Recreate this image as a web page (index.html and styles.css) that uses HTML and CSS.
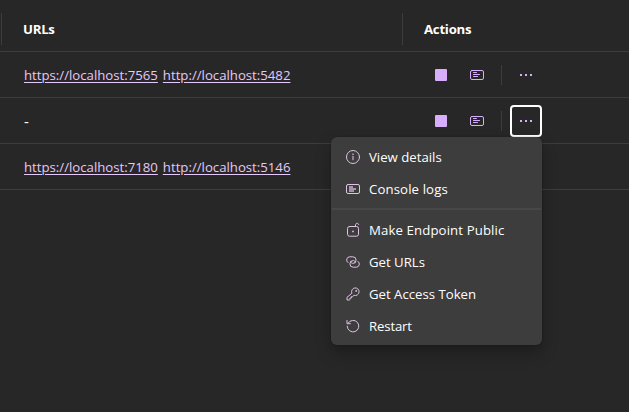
FILE: index.html
```html
<!DOCTYPE html>
<html lang="en">
<head>
<meta charset="utf-8">
<title>Resources</title>
<link rel="stylesheet" href="styles.css">
</head>
<body>
<svg class="sprite" aria-hidden="true">
  <symbol id="logs" viewBox="0 0 16 16"><rect x="1.5" y="3.5" width="13" height="9" rx="1.5"/><path d="M4.5 5.5h3M4.5 7.5h6M4.5 9.5h4"/></symbol>
  <symbol id="dots" viewBox="0 0 16 16"><rect x="2" y="7" width="2" height="2"/><rect x="7" y="7" width="2" height="2"/><rect x="12" y="7" width="2" height="2"/></symbol>
</svg>
<main class="grid">
  <div class="row header">
    <div class="cell head">URLs</div>
    <div class="cell head actions-head">Actions</div>
  </div>
  <div class="row">
    <div class="cell urls"><a href="#">https://localhost:7565</a><a href="#">http://localhost:5482</a></div>
    <div class="cell actions">
      <span class="stop"></span><svg class="icon line"><use href="#logs"/></svg><span class="divider"></span>
      <button class="more" aria-label="Actions"><svg class="icon solid"><use href="#dots"/></svg></button>
    </div>
  </div>
  <div class="row">
    <div class="cell urls"><span class="none">-</span></div>
    <div class="cell actions">
      <span class="stop"></span><svg class="icon line"><use href="#logs"/></svg><span class="divider"></span>
      <div class="anchor">
        <button class="more focused" aria-label="Actions"><svg class="icon solid"><use href="#dots"/></svg></button>
        <div class="menu">
          <div class="item"><svg class="icon" viewBox="0 0 16 16"><circle cx="8" cy="8" r="6.5"/><path class="soft" d="M8 7.6v3"/><circle class="dot" cx="8" cy="5.2" r=".8"/></svg><span>View details</span></div>
          <div class="item"><svg class="icon" viewBox="0 0 16 16"><rect x="1.5" y="3.5" width="13" height="9" rx="1.5"/><path class="block" d="M4 5h4v2h3v2H9v2H4z"/></svg><span class="wide">Console logs</span></div>
          <div class="separator"></div>
          <div class="item"><svg class="icon" viewBox="0 0 16 16"><rect x="2.5" y="4.5" width="11" height="9.7" rx="2"/><path d="M10.5 4.5V3c0-1 .7-1.7 1.6-1.7s1.6.7 1.6 1.4"/><circle class="dot" cx="8" cy="9.4" r=".9"/></svg><span class="wide">Make Endpoint Public</span></div>
          <div class="item"><svg class="icon" viewBox="0 0 16 16"><path d="M3 8.6A3.2 3.2 0 0 1 4.7 2.8h3.1a3.3 3.3 0 0 1 0 6.6H7.4a1.6 1.6 0 0 1-1.5-2.2"/><path d="M13 7.4a3.2 3.2 0 0 1-1.7 5.8H8.2a3.3 3.3 0 0 1 0-6.6h.4a1.6 1.6 0 0 1 1.5 2.2"/></svg><span>Get URLs</span></div>
          <div class="item"><svg class="icon" viewBox="0 0 16 16"><path d="M6.7 7A3.8 3.8 0 1 1 9 9.3L7.7 10.6H6.4V12H5v1.5L4.3 14H2v-2.3z"/><circle class="dot" cx="11.2" cy="4.9" r=".9"/></svg><span>Get Access Token</span></div>
          <div class="item"><svg class="icon" viewBox="0 0 16 16"><path d="M3 5.2A5.8 5.8 0 1 1 2.2 8.2M2 2.5v3.2h3.4"/></svg><span class="narrow">Restart</span></div>
        </div>
      </div>
    </div>
  </div>
  <div class="row">
    <div class="cell urls"><a href="#">https://localhost:7180</a><a href="#">http://localhost:5146</a></div>
    <div class="cell actions"></div>
  </div>
</main>
</body>
</html>
```
FILE: styles.css
```css
* { box-sizing: border-box; }
body {
  margin: 0;
  height: 412px;
  overflow: hidden;
  background: #272727;
  color: #fff;
  font: 13.2px/20px "Open Sans", "Noto Sans", sans-serif;
}
.sprite { position: absolute; width: 0; height: 0; }
.row {
  display: grid;
  grid-template-columns: 401px 1fr;
  height: 46px;
  padding-left: 1px;
  border-bottom: 1px solid #3d3d3d;
}
.header { height: 52px; padding-top: 13px; }
.cell { display: flex; align-items: center; }
.head {
  height: 32px;
  padding-left: 21px;
  border-left: 1px solid #3d3d3d;
  font-weight: 700;
  letter-spacing: -.25px;
}
.actions-head { padding-left: 21px; }
.urls { gap: 5px; padding-left: 23px; }
.none { font-size: 15px; }
a { color: #e6c8fa; text-underline-offset: 2px; text-decoration-thickness: 1px; }
.actions { padding-left: 33px; }
.icon {
  display: block;
  flex: none;
  width: 16px;
  height: 16px;
  fill: none;
  stroke: currentColor;
  stroke-width: 1;
  stroke-linecap: round;
  stroke-linejoin: round;
}
.stop { width: 12px; height: 12px; margin-right: 22px; border-radius: 1px; background: #d7aefb; }
.line { color: #d7aefb; }
.solid { fill: currentColor; stroke: none; }
.divider { width: 1px; height: 20px; margin: 0 8px 0 16px; background: #3d3d3d; }
.anchor { position: relative; }
.more {
  display: grid;
  place-items: center;
  width: 32px;
  height: 32px;
  padding: 0;
  border: 2px solid transparent;
  border-radius: 4px;
  background: none;
  color: #d7aefb;
}
.focused { border-color: #fff; }
.menu {
  position: absolute;
  z-index: 1;
  top: 32px;
  right: 0;
  width: 211px;
  padding: 4px 0 3px;
  border-radius: 6px;
  background: #3d3d3d;
  box-shadow: 0 0 2px rgba(0, 0, 0, .24), 0 8px 16px rgba(0, 0, 0, .28);
}
.item {
  display: flex;
  align-items: center;
  gap: 8px;
  height: 32px;
  padding-left: 14px;
  white-space: nowrap;
}
.item .icon { color: #dfc3e4; }
.item .dot { fill: currentColor; stroke: none; }
.item .soft { stroke-width: 1.6; opacity: .65; }
.item .block { fill: currentColor; stroke: none; opacity: .65; }
.wide { letter-spacing: .12px; }
.narrow { letter-spacing: -.15px; }
.separator { height: 2px; margin: 3px 1px 4px; background: #484848; }
```
